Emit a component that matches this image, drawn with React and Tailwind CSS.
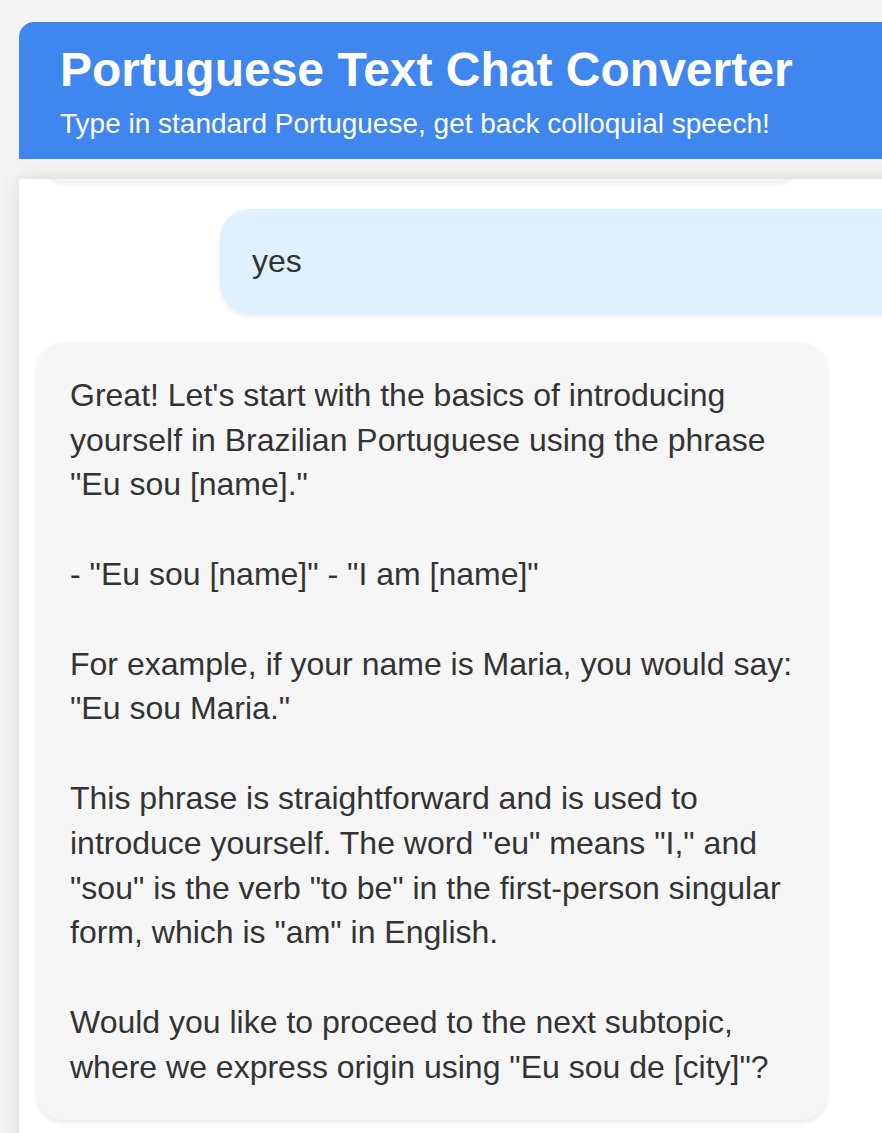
export default function App() {
  const reply = `Great! Let's start with the basics of introducing yourself in Brazilian Portuguese using the phrase "Eu sou [name]."

- "Eu sou [name]" - "I am [name]"

For example, if your name is Maria, you would say: "Eu sou Maria."

This phrase is straightforward and is used to introduce yourself. The word "eu" means "I," and "sou" is the verb "to be" in the first-person singular form, which is "am" in English.

Would you like to proceed to the next subtopic, where we express origin using "Eu sou de [city]"?`;

  return (
    <div className="h-[1133px] w-[882px] overflow-hidden bg-[#f4f4f4] font-['Liberation_Sans',Arial,sans-serif] text-[#333]">
      <div className="ml-[19px] w-[1000px] pt-[22px]">
        <header className="rounded-tl-[15px] bg-[#4086ef] pb-[19px] pl-[41px] pt-[24px] text-white">
          <h1 className="text-[48px] font-bold leading-[48px]">Portuguese Text Chat Converter</h1>
          <p className="mt-[14px] text-[28px] leading-[32px]">
            Type in standard Portuguese, get back colloquial speech!
          </p>
        </header>

        <main className="mt-[20px] h-[1000px] overflow-hidden bg-white px-[19px] shadow-[0_0_20px_rgba(0,0,0,0.12)]">
          {/* previous bubble, scrolled mostly out of view */}
          <div className="-mt-[58px] ml-[2px] h-[60px] w-[762px] rounded-[25px] bg-[#f6f6f6] shadow-[0_2px_6px_rgba(0,0,0,0.1)]" />

          <div className="ml-[182px] mt-[28px] rounded-l-[30px] bg-[#e1f0fd] px-[32px] py-[30px] text-[32px] leading-[1.4] shadow-[0_2px_5px_rgba(0,0,0,0.08)]">
            yes
          </div>

          <div className="mt-[29px] w-[788px] whitespace-pre-line rounded-[25px] bg-[#f6f6f6] px-[32px] py-[30px] text-[32px] leading-[1.4] shadow-[0_2px_6px_rgba(0,0,0,0.1)]">
            {reply}
          </div>
        </main>
      </div>
    </div>
  );
}
